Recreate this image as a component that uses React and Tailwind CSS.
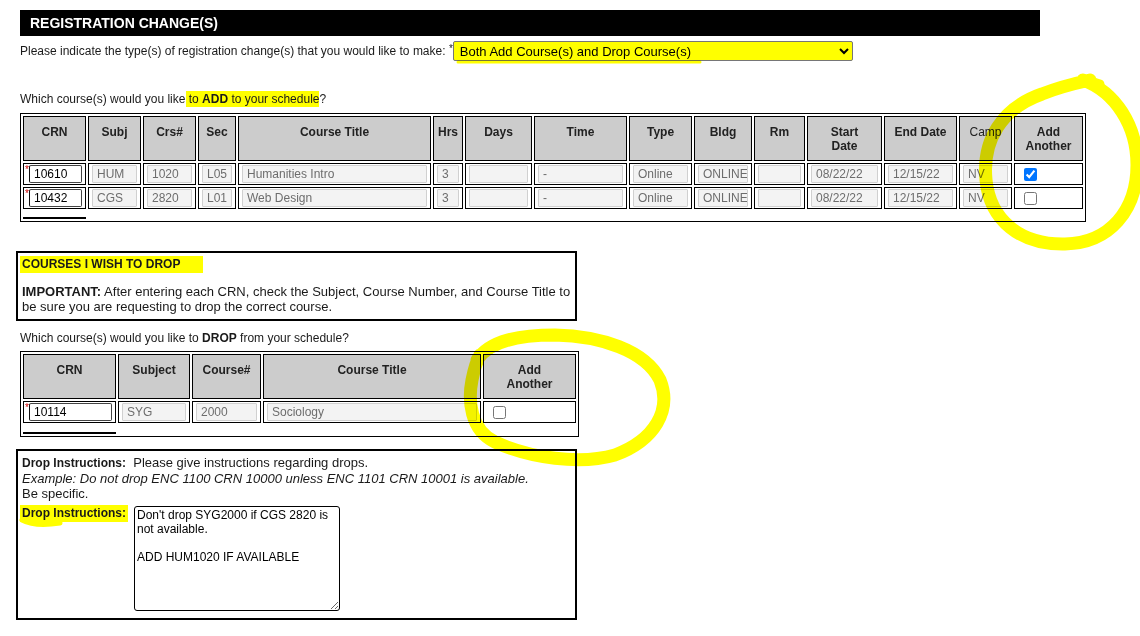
import React from 'react';

const addCols = [
  { label: 'CRN', w: 'w-[63px]' },
  { label: 'Subj', w: 'w-[53px]' },
  { label: 'Crs#', w: 'w-[53px]' },
  { label: 'Sec', w: 'w-[38px]' },
  { label: 'Course Title', w: 'w-[193px]' },
  { label: 'Hrs', w: 'w-[30px]' },
  { label: 'Days', w: 'w-[67px]' },
  { label: 'Time', w: 'w-[93px]' },
  { label: 'Type', w: 'w-[63px]' },
  { label: 'Bldg', w: 'w-[58px]' },
  { label: 'Rm', w: 'w-[51px]' },
  { label: 'Start Date', w: 'w-[75px]', two: ['Start', 'Date'] },
  { label: 'End Date', w: 'w-[73px]' },
  { label: 'Camp', w: 'w-[53px]', light: true },
  { label: 'Add Another', w: 'w-[69px]', two: ['Add', 'Another'] },
];

const addRows = [
  { crn: '10610', vals: ['HUM', '1020', 'L05', 'Humanities Intro', '3', '', '-', 'Online', 'ONLINE', '', '08/22/22', '12/15/22', 'NV'], checked: true },
  { crn: '10432', vals: ['CGS', '2820', 'L01', 'Web Design', '3', '', '-', 'Online', 'ONLINE', '', '08/22/22', '12/15/22', 'NV'], checked: false },
];

const dropCols = [
  { label: 'CRN', w: 'w-[93px]' },
  { label: 'Subject', w: 'w-[72px]' },
  { label: 'Course#', w: 'w-[69px]' },
  { label: 'Course Title', w: 'w-[218px]' },
  { label: 'Add Another', w: 'w-[93px]', two: ['Add', 'Another'] },
];

const HeadCell = ({ col }) => (
  <th
    className={`${col.w} border border-black bg-[#cccccc] align-top pt-[8px] pb-[7px] px-0 text-center text-[12px] leading-[14px] text-[#222] ${col.light ? 'font-normal' : 'font-bold'}`}
  >
    {col.two ? (
      <>
        {col.two[0]}
        <br />
        {col.two[1]}
      </>
    ) : (
      col.label
    )}
  </th>
);

const CrnCell = ({ value }) => (
  <td className="border border-black px-[1px] py-[1px]">
    <div className="flex items-start">
      <span className="w-[4px] text-[10px] leading-[10px] text-[#cc0000]">*</span>
      <input
        readOnly
        value={value}
        className="h-[18px] min-w-0 flex-1 mr-[2px] rounded-[2px] border border-[#444] border-l-[#111] bg-white pl-[4px] text-[12px] text-black outline-none"
      />
    </div>
  </td>
);

const GreyCell = ({ value }) => (
  <td className="border border-black px-[3px] py-[1px]">
    <input
      readOnly
      value={value}
      className="block h-[18px] w-full rounded-[1px] border border-[#d0d0d0] bg-[#f3f3f3] pl-[4px] text-[12px] text-[#6d6d6d] outline-none"
    />
  </td>
);

const CheckCell = ({ checked, pad = 'pl-[9px]' }) => (
  <td className={`border border-black ${pad} py-[1px]`}>
    <input type="checkbox" defaultChecked={checked} className="block h-[13px] w-[13px] accent-[#0075ff]" />
  </td>
);

export default function App() {
  return (
    <div className="relative h-[636px] w-[1140px] overflow-hidden bg-white font-['Liberation_Sans',Arial,sans-serif] text-[12px] text-[#1a1a1a]">
      <div className="pl-[20px] pt-[10px]">
        {/* Header */}
        <div className="flex h-[26px] w-[1020px] items-center bg-black pl-[10px] text-[14px] font-bold text-white">
          REGISTRATION CHANGE(S)
        </div>

        <div className="mt-[5px] flex h-[20px] items-center">
          <span>
            Please indicate the type(s) of registration change(s) that you would like to make: <span className="relative -top-[3px] text-[10px]">*</span>
          </span>
          <select
            defaultValue="both"
            className="h-[20px] w-[400px] rounded-[2px] border border-[#767676] bg-[#ffff00] pl-[2px] text-[13px] text-black"
          >
            <option value="both">Both Add Course(s) and Drop Course(s)</option>
            <option value="add">Add Course(s)</option>
            <option value="drop">Drop Course(s)</option>
          </select>
        </div>

        {/* Add */}
        <div className="mt-[31px] leading-[15px]">
          Which course(s) would you like{' '}
          <span className="-ml-[3px] bg-[#ffff00] py-[1px] pl-[3px]">
            to <b>ADD</b> to your schedule
          </span>
          ?
        </div>

        <table className="mt-[6px] w-[1066px] table-fixed border-separate border-spacing-[2px] border border-black">
          <thead>
            <tr>
              {addCols.map((c) => (
                <HeadCell key={c.label} col={c} />
              ))}
            </tr>
          </thead>
          <tbody>
            {addRows.map((r) => (
              <tr key={r.crn}>
                <CrnCell value={r.crn} />
                {r.vals.map((v, i) => (
                  <GreyCell key={i} value={v} />
                ))}
                <CheckCell checked={r.checked} />
              </tr>
            ))}
            <tr>
              <td className="p-0 pt-[6px]">
                <div className="h-[2px] bg-black" />
              </td>
              <td colSpan={14} className="p-0" />
            </tr>
          </tbody>
        </table>

        {/* Drop box */}
        <div className="-ml-[4px] mt-[29px] w-[561px] border-2 border-black pb-[5px] pl-[4px] pt-[3px]">
          <div className="leading-[17px]">
            <span className="-ml-[2px] inline-block w-[183px] bg-[#ffff00] pl-[2px] font-bold">COURSES I WISH TO DROP</span>
          </div>
          <p className="mt-[11px] text-[13px] leading-[15px]">
            <b>IMPORTANT:</b> After entering each CRN, check the Subject, Course Number, and Course Title to be sure you are requesting to drop the correct course.
          </p>
        </div>

        <div className="mt-[10px] leading-[15px]">
          Which course(s) would you like to <b>DROP</b> from your schedule?
        </div>

        <table className="mt-[5px] w-[559px] table-fixed border-separate border-spacing-[2px] border border-black">
          <thead>
            <tr>
              {dropCols.map((c) => (
                <HeadCell key={c.label} col={c} />
              ))}
            </tr>
          </thead>
          <tbody>
            <tr>
              <CrnCell value="10114" />
              <GreyCell value="SYG" />
              <GreyCell value="2000" />
              <GreyCell value="Sociology" />
              <CheckCell checked={false} />
            </tr>
            <tr>
              <td className="p-0 pt-[7px]">
                <div className="h-[2px] bg-black" />
              </td>
              <td colSpan={4} className="p-0" />
            </tr>
          </tbody>
        </table>

        {/* Drop instructions */}
        <div className="-ml-[4px] mt-[12px] w-[561px] border-2 border-black pb-[7px] pl-[4px] pt-[4px] text-[13px] leading-[15px]">
          <div>
            <b className="text-[12px]">Drop Instructions:</b>
            {'\u00a0 '}Please give instructions regarding drops.
          </div>
          <div className="italic">Example: Do not drop ENC 1100 CRN 10000 unless ENC 1101 CRN 10001 is available.</div>
          <div>Be specific.</div>
          <div className="mt-[4px] flex items-start">
            <span className="-ml-[2px] inline-block bg-[#ffff00] px-[2px] text-[12px] font-bold leading-[17px]">Drop Instructions:</span>
            <textarea
              readOnly
              defaultValue={"Don't drop SYG2000 if CGS 2820 is\nnot available.\n\nADD HUM1020 IF AVAILABLE"}
              className="ml-[6px] mt-[1px] h-[105px] w-[206px] resize rounded-[3px] border-[1.5px] border-black px-[2px] py-[1px] text-[12px] leading-[14px] text-black outline-none"
            />
          </div>
        </div>
      </div>

      {/* highlighter marks */}
      <svg
        className="pointer-events-none absolute left-0 top-0 mix-blend-multiply"
        width="1140"
        height="636"
        viewBox="0 0 1140 636"
        fill="none"
        stroke="#ffff00"
        strokeLinecap="round"
        strokeLinejoin="round"
      >
        <path
          d="M1083,80 C1115,92 1137,125 1137,165 C1137,210 1110,243 1065,244 C1020,245 990,220 986,180 C982,140 1002,108 1042,94 C1057,88 1072,84 1090,80"
          strokeWidth="13"
        />
        <path d="M1084,79 L1100,84" strokeWidth="9" />
        <path
          d="M477,360 C490,340 520,335 555,335 C600,336 645,350 660,380 C672,410 655,440 615,455 C580,465 530,458 495,442 C470,430 468,400 472,380 C474,370 476,362 480,355"
          strokeWidth="13"
        />
        <path d="M458,62 L700,62" strokeWidth="3" />
        <path d="M22,520 Q35,527 60,523" strokeWidth="5" />
      </svg>
    </div>
  );
}
